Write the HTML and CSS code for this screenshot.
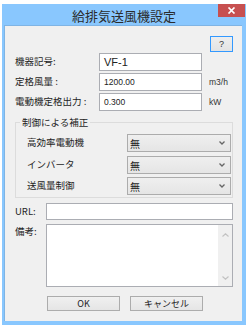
FILE: index.html
```html
<!DOCTYPE html>
<html lang="ja">
<head>
<meta charset="utf-8">
<title>給排気送風機設定</title>
<link rel="stylesheet" href="styles.css">
</head>
<body>
<div class="window">
  <div class="titlebar">
    <span class="title">給排気送風機設定</span>
    <span class="close"><svg width="9" height="7" viewBox="0 0 9 7"><path d="M1.5 0.5 L7.5 6.5 M7.5 0.5 L1.5 6.5" stroke="#fff" stroke-width="1.7"/></svg></span>
  </div>
  <div class="client">
    <div class="help-row"><div class="help">?</div></div>
    <div class="row r1"><span class="lbl">機器記号:</span><div class="field big">VF-1</div></div>
    <div class="row r2"><span class="lbl">定格風量 :</span><div class="field">1200.00</div><span class="unit">m3/h</span></div>
    <div class="row r2"><span class="lbl">電動機定格出力 :</span><div class="field">0.300</div><span class="unit">kW</span></div>
    <fieldset class="group">
      <legend>制御による補正</legend>
      <div class="crow c1"><span class="clbl">高効率電動機</span><div class="combo"><span>無</span><svg class="chev" width="6" height="4" viewBox="0 0 6 4"><path d="M0.5 0.5 L3 3 L5.5 0.5" fill="none" stroke="#666" stroke-width="1.3"/></svg></div></div>
      <div class="crow c2"><span class="clbl">インバータ</span><div class="combo"><span>無</span><svg class="chev" width="6" height="4" viewBox="0 0 6 4"><path d="M0.5 0.5 L3 3 L5.5 0.5" fill="none" stroke="#666" stroke-width="1.3"/></svg></div></div>
      <div class="crow c3"><span class="clbl">送風量制御</span><div class="combo"><span>無</span><svg class="chev" width="6" height="4" viewBox="0 0 6 4"><path d="M0.5 0.5 L3 3 L5.5 0.5" fill="none" stroke="#666" stroke-width="1.3"/></svg></div></div>
    </fieldset>
    <div class="row url"><span class="slbl">URL:</span><div class="field wide"></div></div>
    <div class="memo-row"><span class="slbl memo-lbl">備考:</span>
      <div class="memo">
        <div class="vscroll">
          <svg width="7" height="4" viewBox="0 0 7 4"><path d="M0.5 3.5 L3.5 0.8 L6.5 3.5" fill="none" stroke="#c2c2c2" stroke-width="1.2"/></svg>
          <svg width="7" height="4" viewBox="0 0 7 4"><path d="M0.5 0.5 L3.5 3.2 L6.5 0.5" fill="none" stroke="#c2c2c2" stroke-width="1.2"/></svg>
        </div>
      </div>
    </div>
    <div class="btn-row"><div class="btn">OK</div><div class="btn">キャンセル</div></div>
  </div>
</div>
</body>
</html>
```

FILE: styles.css
```css
body {
  margin: 0;
  background: #ffffff;
  font-family: "Noto Sans CJK JP", "Noto Sans", sans-serif;
  color: #1e1e1e;
}
.window {
  margin: 4px 0 0 2px;
  width: 244px;
  height: 321px;
  background: #89c7fe;
  display: flex;
  flex-direction: column;
}
.titlebar {
  height: 21px;
  position: relative;
  display: flex;
  align-items: center;
  justify-content: center;
}
.title {
  font-size: 13px;
  line-height: 1;
  color: #2b2b2b;
  padding-top: 1px;
}
.close {
  position: absolute;
  top: 0;
  right: 1px;
  width: 27px;
  height: 13px;
  background: #c75050;
  display: flex;
  align-items: center;
  justify-content: center;
}
.client {
  margin: 0 4px 4px 2px;
  height: 296px;
  box-sizing: border-box;
  background: #f0f0f0;
  border-top: 1px solid #7fb4e4;
  border-left: 1px solid #7fb4e4;
  padding-left: 10px;
}
.help-row {
  display: flex;
  justify-content: flex-end;
  margin-top: 10px;
  padding-right: 9px;
  height: 16px;
}
.help {
  width: 23px;
  height: 16px;
  box-sizing: border-box;
  border: 1px solid #3399ff;
  background: linear-gradient(#eeeeee, #e3e3e3);
  font-family: "Liberation Sans", sans-serif;
  font-size: 9px;
  display: flex;
  align-items: center;
  justify-content: center;
  color: #333;
}
.row {
  display: flex;
  align-items: center;
  height: 18px;
}
.r1 { margin-top: 1px; }
.r2 { margin-top: 2px; }
.lbl {
  width: 84px;
  font-size: 9.5px;
  line-height: 1;
  white-space: nowrap;
}
.field {
  width: 103px;
  height: 18px;
  box-sizing: border-box;
  border: 1px solid #abadb3;
  background: #ffffff;
  padding-left: 4px;
  font-family: "Liberation Sans", sans-serif;
  font-size: 8.5px;
  display: flex;
  align-items: center;
  color: #222;
}
.field.big { font-size: 11px; }
.unit {
  margin-left: 7px;
  font-family: "Liberation Sans", sans-serif;
  font-size: 8.5px;
  color: #333;
}
.group {
  margin: 5px 0 0 0;
  width: 218px;
  box-sizing: border-box;
  border: 1px solid #dcdcdc;
  padding: 0 0 2px 0;
  min-width: 0;
}
.group legend {
  margin-left: 4px;
  padding: 0 2px;
  font-size: 9.5px;
  line-height: 12px;
}
.crow {
  display: flex;
  align-items: center;
  height: 18px;
  padding-left: 11px;
}
.c1 { margin-top: 6px; }
.c2 { margin-top: 4px; }
.c3 { margin-top: 3px; }
.clbl {
  width: 100px;
  font-size: 9.5px;
  line-height: 1;
  white-space: nowrap;
}
.combo {
  width: 104px;
  height: 18px;
  box-sizing: border-box;
  border: 1px solid #acacac;
  background: linear-gradient(#efefef, #e5e5e5);
  display: flex;
  align-items: center;
  padding-left: 2px;
  font-size: 10px;
}
.chev {
  margin-left: auto;
  margin-right: 5px;
}
.url {
  margin-top: 5px;
  height: 17px;
}
.slbl {
  width: 31px;
  font-size: 9.5px;
  line-height: 1;
}
.field.wide {
  width: 187px;
  height: 17px;
}
.memo-row {
  display: flex;
  align-items: flex-start;
  margin-top: 4px;
  height: 63px;
}
.memo-lbl { padding-top: 3px; }
.memo {
  width: 187px;
  height: 63px;
  box-sizing: border-box;
  border: 1px solid #abadb3;
  background: #ffffff;
  display: flex;
  justify-content: flex-end;
}
.vscroll {
  width: 14px;
  background: #f0f0f0;
  display: flex;
  flex-direction: column;
  align-items: center;
  justify-content: space-between;
  padding: 8px 0 6px;
  box-sizing: border-box;
}
.btn-row {
  display: flex;
  gap: 10px;
  margin-top: 9px;
  padding-left: 32px;
}
.btn {
  width: 73px;
  height: 15px;
  box-sizing: border-box;
  border: 1px solid #acacac;
  background: linear-gradient(#f0f0f0, #e5e5e5);
  display: flex;
  align-items: center;
  justify-content: center;
  font-size: 9px;
  color: #222;
}
```
